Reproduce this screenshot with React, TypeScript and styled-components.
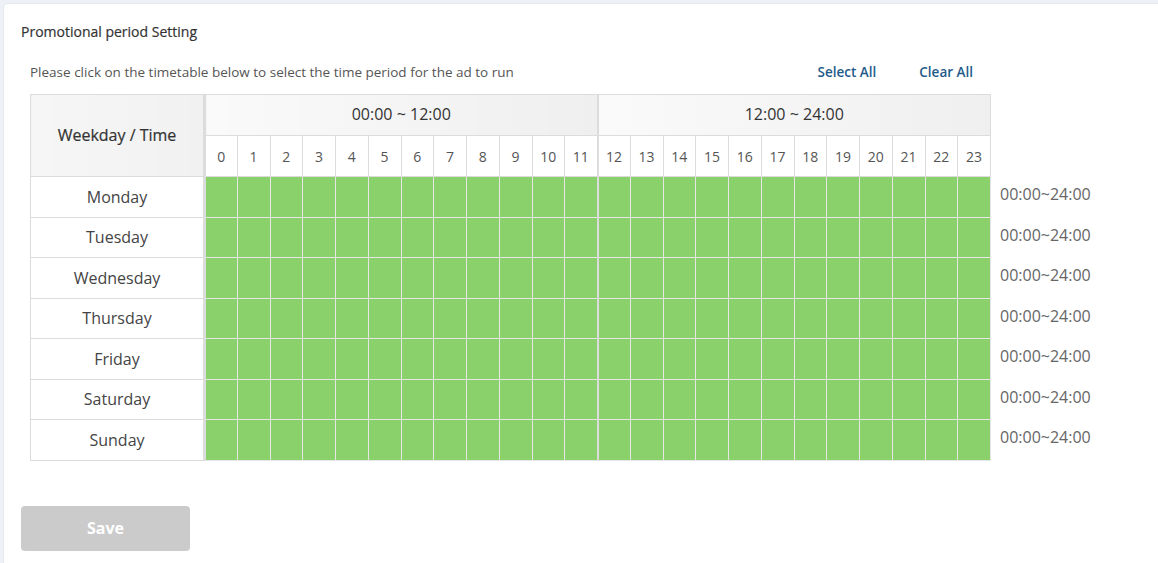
import styled, { createGlobalStyle } from 'styled-components';

const GlobalStyle = createGlobalStyle`
  html, body {
    margin: 0;
    padding: 0;
    background: #eef2f6;
    font-family: "Open Sans", "Noto Sans", sans-serif;
    overflow: hidden;
  }
`;

const Card = styled.div`
  margin: 3px -6px 0 3px;
  min-height: 600px;
  background: #fff;
  border: 1px solid #e4e8ed;
  border-radius: 4px;
  padding: 18px 0 0 17px;
`;

const Title = styled.h3`
  margin: 0;
  font-size: 14px;
  font-weight: 400;
  color: #333;
  line-height: 20px;
  -webkit-text-stroke: 0.2px #333;
`;

const Body = styled.div`
  padding: 20px 0 0 9px;
`;

const HintRow = styled.div`
  display: flex;
  align-items: center;
  width: 943px;
  padding-right: 18px;
  height: 20px;
`;

const Hint = styled.span`
  flex: 1;
  font-size: 13.5px;
  color: #555;
`;

const LinkButton = styled.a<{ $gap?: number }>`
  font-size: 13.5px;
  font-weight: 600;
  color: #1f5a8b;
  cursor: pointer;
  margin-left: ${(p) => p.$gap ?? 0}px;
`;

const Schedule = styled.div`
  display: flex;
  margin-top: 12px;
`;

const Table = styled.table`
  width: 961px;
  table-layout: fixed;
  border-collapse: collapse;
  border: 1px solid #dcdcdc;
`;

const HeadCell = styled.th<{ $split?: boolean }>`
  height: 38px;
  padding: 0 0 2px;
  font-size: 16px;
  font-weight: 400;
  color: #333;
  border: 1px solid #dcdcdc;
  border-left-width: ${(p) => (p.$split ? 2 : 1)}px;
  background: linear-gradient(to right, #fafafa, #efefef);
`;

const CornerCell = styled(HeadCell)`
  -webkit-text-stroke: 0.2px #333;
  border-right: 3px solid #dcdcdc;
  background: linear-gradient(to right, #f6f6f6, #f1f1f1);
`;

const HourCell = styled.td<{ $split?: boolean }>`
  height: 40px;
  padding: 0;
  text-align: center;
  font-size: 14px;
  color: #555;
  border: 1px solid #dcdcdc;
  border-left-width: ${(p) => (p.$split ? 2 : 1)}px;
`;

const DayCell = styled.td`
  height: 39.5px;
  padding: 0;
  text-align: center;
  font-size: 16px;
  color: #444;
  border: 1px solid #dcdcdc;
  border-right: 3px solid #dcdcdc;
`;

const Slot = styled.td<{ $on: boolean; $split?: boolean }>`
  padding: 0;
  background: ${(p) => (p.$on ? '#8ad06b' : '#fff')};
  border: 1px solid #e6e6e6;
  border-left: ${(p) => (p.$split ? '2px solid #dcdcdc' : '1px solid #e6e6e6')};
  cursor: pointer;
`;

const Ranges = styled.div`
  display: flex;
  flex-direction: column;
  padding: 82px 0 0 9px;
`;

const Range = styled.div`
  height: 40.5px;
  line-height: 37px;
  font-size: 16px;
  color: #666;
`;

const SaveButton = styled.button`
  margin-top: 45px;
  width: 169px;
  height: 45px;
  border: none;
  border-radius: 4px;
  background: #cbcbcb;
  color: #fff;
  font-family: inherit;
  font-size: 16px;
  font-weight: 700;
  cursor: not-allowed;
`;

const days = ['Monday', 'Tuesday', 'Wednesday', 'Thursday', 'Friday', 'Saturday', 'Sunday'];
const hours = Array.from({ length: 24 }, (_, i) => i);

export default function App() {
  return (
    <>
      <GlobalStyle />
      <Card>
        <Title>Promotional period Setting</Title>
        <Body>
          <HintRow>
            <Hint>Please click on the timetable below to select the time period for the ad to run</Hint>
            <LinkButton>Select All</LinkButton>
            <LinkButton $gap={43}>Clear All</LinkButton>
          </HintRow>
          <Schedule>
            <Table>
              <colgroup>
                <col style={{ width: 174 }} />
                {hours.map((h) => (
                  <col key={h} />
                ))}
              </colgroup>
              <thead>
                <tr>
                  <CornerCell rowSpan={2}>Weekday / Time</CornerCell>
                  <HeadCell colSpan={12}>00:00 ~ 12:00</HeadCell>
                  <HeadCell colSpan={12} $split>
                    12:00 ~ 24:00
                  </HeadCell>
                </tr>
                <tr>
                  {hours.map((h) => (
                    <HourCell key={h} $split={h === 12}>
                      {h}
                    </HourCell>
                  ))}
                </tr>
              </thead>
              <tbody>
                {days.map((d) => (
                  <tr key={d}>
                    <DayCell>{d}</DayCell>
                    {hours.map((h) => (
                      <Slot key={h} $on $split={h === 12} />
                    ))}
                  </tr>
                ))}
              </tbody>
            </Table>
            <Ranges>
              {days.map((d) => (
                <Range key={d}>00:00~24:00</Range>
              ))}
            </Ranges>
          </Schedule>
        </Body>
        <SaveButton disabled>Save</SaveButton>
      </Card>
    </>
  );
}
